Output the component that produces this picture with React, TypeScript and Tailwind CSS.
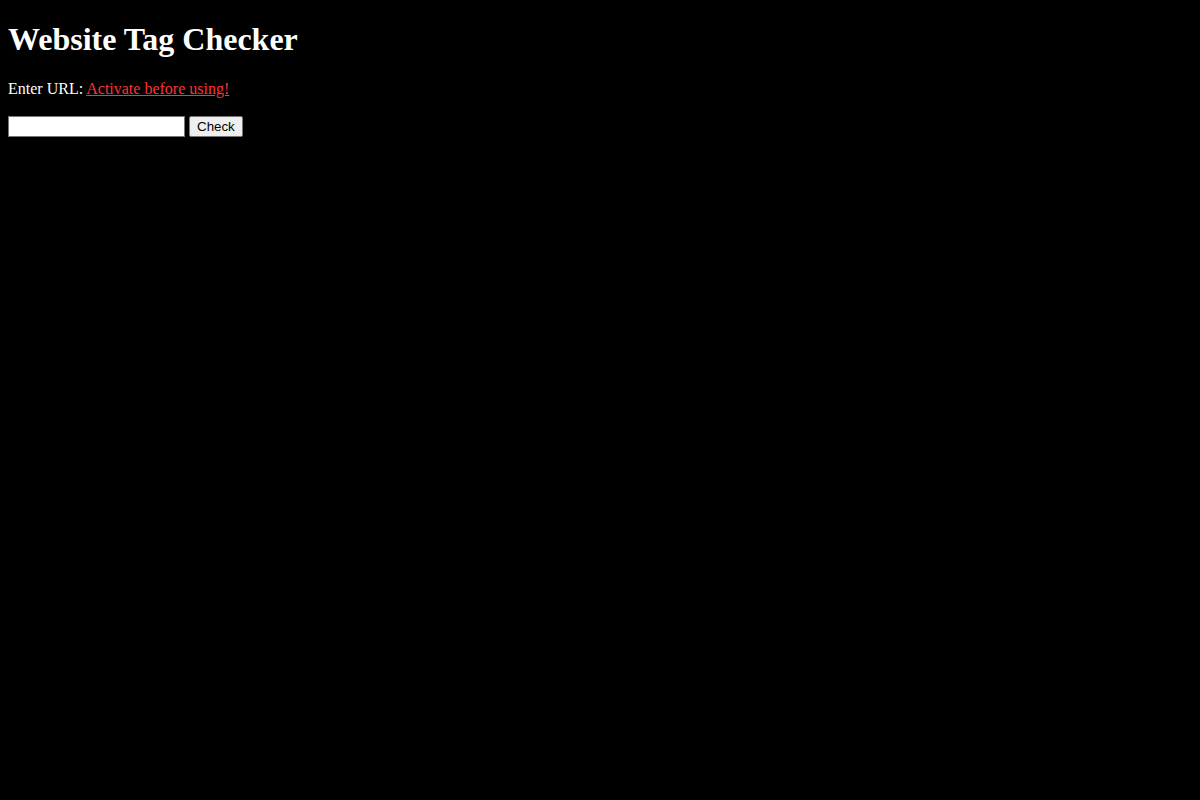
import React from 'react';

const App = () => {
  return (
    <div className="min-h-[800px] bg-black p-2 text-white font-['Liberation_Serif',serif]">
      <h1 className="mt-[13.44px] mb-[21.44px] text-[32px] leading-[37px] font-bold">Website Tag Checker</h1>
      <p className="mt-4 mb-[18px] text-base leading-[18px]">
        Enter URL:{' '}
        <a href="#" className="text-[#ff3333] underline">
          Activate before using!
        </a>
      </p>
      <div className="flex items-center gap-1">
        <input
          type="text"
          className="w-[177px] h-[21px] bg-white text-black border border-[#767676] px-[2px] text-[13.33px] font-['Liberation_Sans',sans-serif]"
        />
        <button className="h-[21px] px-[7px] bg-[#efefef] text-black border border-[#767676] rounded-[2px] text-[13.33px] leading-[15px] font-['Liberation_Sans',sans-serif]">
          Check
        </button>
      </div>
    </div>
  );
};

export default App;
